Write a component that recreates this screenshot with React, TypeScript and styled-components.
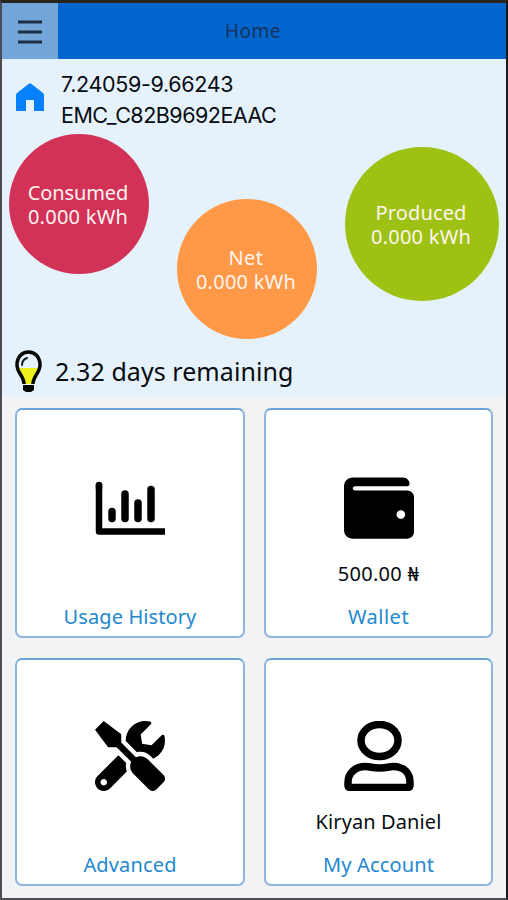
import React from 'react';
import styled, { createGlobalStyle } from 'styled-components';
import { FaTools, FaWallet } from 'react-icons/fa';

const GlobalStyle = createGlobalStyle`
  * { box-sizing: border-box; }
  body { margin: 0; overflow: hidden; }
`;

const Screen = styled.main`
  display: flex;
  flex-direction: column;
  width: 508px;
  height: 900px;
  border: 2px solid #4b4d52;
  border-top: 3px solid #29251c;
  border-right-color: #17191c;
  background: #f2f3f5;
  font-family: 'Noto Sans', sans-serif;
  color: #080b10;
`;

const Header = styled.header`
  display: grid;
  grid-template-columns: 56px 1fr 58px;
  height: 56px;
  flex: none;
  background: #0265ce;
`;

const MenuButton = styled.button`
  display: flex;
  align-items: center;
  justify-content: center;
  padding: 0;
  border: 0;
  background: #74a5d9;
`;

const Title = styled.h1`
  margin: 0;
  text-align: center;
  font-size: 19px;
  font-weight: 400;
  line-height: 57px;
  letter-spacing: 0.5px;
  color: #17335a;
`;

const Overview = styled.section`
  height: 337px;
  flex: none;
  background: #e5f2fb;
`;

const Meter = styled.div`
  display: flex;
  height: 75px;
  padding: 9px 0 0 14px;
`;

const HomeIcon = styled.svg`
  width: 28px;
  height: 28px;
  margin: 15px 17px 0 0;
`;

const MeterText = styled.div`
  padding-top: 1px;
  font-family: Inter, sans-serif;
  font-size: 21.5px;
  line-height: 31px;
  white-space: nowrap;
`;

const MeterLine = styled.div<{ $spacing: number }>`
  letter-spacing: ${({ $spacing }) => $spacing}px;
`;

const Readings = styled.div`
  display: flex;
  align-items: flex-start;
  gap: 28px;
  height: 210px;
  padding-left: 7px;
`;

const Reading = styled.div<{ $color: string; $size: number; $drop: number }>`
  display: flex;
  flex: none;
  flex-direction: column;
  align-items: center;
  justify-content: center;
  width: ${({ $size }) => $size}px;
  height: ${({ $size }) => $size}px;
  margin-top: ${({ $drop }) => $drop}px;
  padding: 1px 2px 0 0;
  border-radius: 50%;
  background: ${({ $color }) => $color};
  color: #fff4ef;
  font-size: 20px;
  line-height: 24px;
  white-space: nowrap;
`;

const ReadingLine = styled.span<{ $spacing: number }>`
  letter-spacing: ${({ $spacing }) => $spacing}px;
`;

const Remaining = styled.div`
  display: flex;
  height: 52px;
  padding: 6px 0 0 13px;
  font-size: 25px;
  line-height: 43px;
  letter-spacing: 0.06px;
`;

const Bulb = styled.svg`
  width: 27px;
  height: 43px;
  margin-right: 13px;
`;

const Cards = styled.nav`
  display: grid;
  grid-template-columns: 230px 229px;
  grid-template-rows: 230px 228px;
  gap: 20px 19px;
  padding: 12px 13px 0;
`;

const Card = styled.a`
  display: grid;
  grid-template-rows: 1fr 51px 36px;
  justify-items: center;
  border: 2px solid #8fb5dc;
  border-top-color: #6ba3d7;
  border-radius: 7px;
  background: #fff;
  white-space: nowrap;
`;

const CardIcon = styled.div`
  display: flex;
  align-self: end;
  align-items: center;
  width: 70px;
  height: 70px;
  margin-bottom: 6px;
  color: #000;

  svg { width: 100%; height: 100%; }
`;

const CardDetail = styled.span<{ $spacing: number }>`
  align-self: end;
  padding-bottom: 6px;
  font-size: 20px;
  line-height: 40px;
  letter-spacing: ${({ $spacing }) => $spacing}px;
`;

const CardLabel = styled.span<{ $spacing: number }>`
  font-size: 20px;
  line-height: 34px;
  letter-spacing: ${({ $spacing }) => $spacing}px;
  color: #2388d0;
`;

const readings = [
  { label: 'Consumed', color: '#d23158', size: 140, drop: 0, spacing: -0.1 },
  { label: 'Net', color: '#ff9947', size: 140, drop: 65, spacing: 0.5 },
  { label: 'Produced', color: '#9dc213', size: 154, drop: 13, spacing: 0.15 },
];

function ChartIcon() {
  return (
    <svg viewBox="0 0 70 70" fill="none" stroke="#000" strokeLinecap="round">
      <path d="M4 11v47.500h66" strokeWidth="6.5" strokeLinejoin="round" strokeLinecap="butt" />
      <path d="M4 12v3" strokeWidth="6.5" />
      <path d="M17 38.500v7M30 21v24.500M43 30v15.500M56 16.500v29" strokeWidth="7.5" />
    </svg>
  );
}

function UserIcon() {
  return (
    <svg viewBox="0 0 70 70" fill="none" stroke="#000" strokeWidth="7.5" strokeLinejoin="round">
      <ellipse cx="35.500" cy="19.500" rx="18.500" ry="16" />
      <path d="M22 45.500C11 45.500 4 52 4 61.500V64q0 2.500 2.500 2.500h57q2.500 0 2.500-2.500v-2.500C66 52 60 45.500 49 45.500c-3 0-6 1.500-13.500 1.500S25 45.500 22 45.500Z" />
    </svg>
  );
}

const cards = [
  { label: 'Usage History', spacing: 0.1, detail: '', detailSpacing: 0, icon: <ChartIcon /> },
  { label: 'Wallet', spacing: 0.5, detail: '500.00 ₦', detailSpacing: 0.3, icon: <FaWallet /> },
  { label: 'Advanced', spacing: 0.15, detail: '', detailSpacing: 0, icon: <FaTools /> },
  { label: 'My Account', spacing: 0.15, detail: 'Kiryan Daniel', detailSpacing: 0.1, icon: <UserIcon /> },
];

export default function App() {
  return (
    <>
      <GlobalStyle />
      <Screen>
        <Header>
          <MenuButton aria-label="Menu">
            <svg width="24" height="24" viewBox="0 0 24 24" stroke="#1d3044" strokeWidth="3">
              <path d="M0 2h24M0 12h24M0 22h24" />
            </svg>
          </MenuButton>
          <Title>Home</Title>
        </Header>
        <Overview>
          <Meter>
            <HomeIcon viewBox="0 0 28 28">
              <path d="M12.500 1q1.500-1.400 3 0L27 10q1 .8 1 2v16H18V17h-8v11H0V12q0-1.200 1-2Z" fill="#0780fb" />
            </HomeIcon>
            <MeterText>
              <MeterLine $spacing={-0.33}>7.24059-9.66243</MeterLine>
              <MeterLine $spacing={-0.5}>EMC_C82B9692EAAC</MeterLine>
            </MeterText>
          </Meter>
          <Readings>
            {readings.map((r) => (
              <Reading key={r.label} $color={r.color} $size={r.size} $drop={r.drop}>
                <ReadingLine $spacing={r.spacing}>{r.label}</ReadingLine>
                <ReadingLine $spacing={0.25}>0.000 kWh</ReadingLine>
              </Reading>
            ))}
          </Readings>
          <Remaining>
            <Bulb viewBox="0 0 27 43">
              <path d="M3 18h21l-5 10-1 6H9l-1-6Z" fill="#eef01b" />
              <path d="M9 34c0-8-7-11-7-19C2 7 7 2 13.500 2S25 7 25 15c0 8-7 11-7 19" fill="none" stroke="#050807" strokeWidth="3.500" />
              <path d="M7 15c0-4 2-6 5-7" fill="none" stroke="#15201f" strokeWidth="2" strokeLinecap="round" />
              <path d="M8 35h11v5l-3 2h-5l-3-2Z" fill="#050807" />
            </Bulb>
            <span>2.32 days remaining</span>
          </Remaining>
        </Overview>
        <Cards>
          {cards.map((c) => (
            <Card key={c.label}>
              <CardIcon>{c.icon}</CardIcon>
              <CardDetail $spacing={c.detailSpacing}>{c.detail}</CardDetail>
              <CardLabel $spacing={c.spacing}>{c.label}</CardLabel>
            </Card>
          ))}
        </Cards>
      </Screen>
    </>
  );
}
